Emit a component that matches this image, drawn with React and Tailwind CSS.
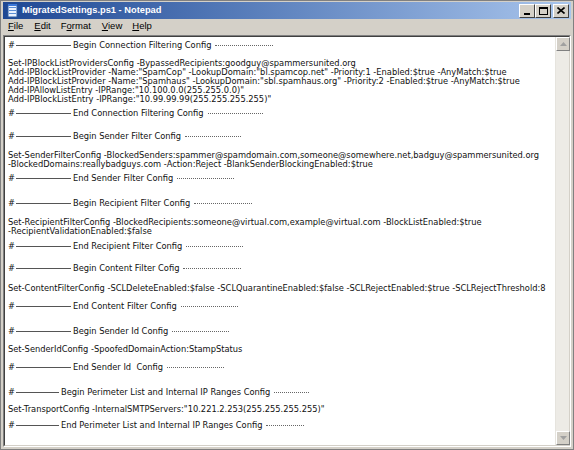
import React from "react";

const F = { fontFamily: '"DejaVu Sans", Verdana, sans-serif' };

function Header({ text, lead = "w-[55px]", trail = "w-[58px]", mt }) {
  return (
    <div className={`flex items-center h-[9px] ${mt}`}>
      <span>#</span>
      <span className={`inline-block h-px bg-[#555] ml-[1px] ${lead}`}></span>
      <span className="ml-[2px] whitespace-pre">{text}</span>
      <span className={`inline-block h-px border-t border-dotted border-[#666] ml-[4px] ${trail}`}></span>
    </div>
  );
}

function Line({ text, mt }) {
  return <div className={`h-[9px] leading-[9px] whitespace-pre ${mt}`}>{text}</div>;
}

function Btn({ children, className = "" }) {
  return (
    <div
      className={`w-[16px] h-[14px] bg-[#d4d0c8] border border-t-white border-l-white border-r-[#404040] border-b-[#404040] flex items-center justify-center text-black ${className}`}
    >
      {children}
    </div>
  );
}

export default function App() {
  return (
    <div className="w-[574px] h-[450px] bg-[#d4d0c8] flex flex-col overflow-hidden border border-[#808080]">
      {/* title bar */}
      <div className="h-[17px] mx-[2px] mt-[1px] bg-gradient-to-r from-[#1e4894] to-[#a9c5ec] flex items-center pl-[3px] pr-[2px]">
        <svg width="14" height="14" viewBox="0 0 14 14">
          <rect x="2" y="1" width="9" height="12" fill="#eaf2ff" stroke="#2a5aa0" />
          <rect x="3" y="3" width="7" height="1" fill="#5b8ed6" />
          <rect x="3" y="6" width="7" height="1" fill="#5b8ed6" />
          <rect x="3" y="9" width="7" height="1" fill="#5b8ed6" />
          <rect x="2" y="0" width="9" height="2" fill="#3c78d8" />
        </svg>
        <span className="ml-[2px] text-white font-bold text-[9.3px] leading-none" style={{ fontFamily: '"Liberation Sans", Arial, sans-serif' }}>
          MigratedSettings.ps1 - Notepad
        </span>
        <div className="ml-auto flex items-center">
          <Btn>
            <div className="w-[6px] h-[2px] bg-black mt-[6px]"></div>
          </Btn>
          <Btn>
            <div className="w-[9px] h-[8px] border border-black border-t-2"></div>
          </Btn>
          <Btn className="ml-[2px]">
            <svg width="8" height="7" viewBox="0 0 8 7">
              <path d="M0.5 0.5 L7.5 6.5 M7.5 0.5 L0.5 6.5" stroke="black" strokeWidth="1.6" />
            </svg>
          </Btn>
        </div>
      </div>
      {/* menu */}
      <div className="h-[13px] flex items-center text-[9.5px] text-black mt-[1px]" style={{ fontFamily: '"Liberation Sans", Arial, sans-serif' }}>
        <span className="ml-[7px]"><u>F</u>ile</span>
        <span className="ml-[11px]"><u>E</u>dit</span>
        <span className="ml-[10px]">F<u>o</u>rmat</span>
        <span className="ml-[11px]"><u>V</u>iew</span>
        <span className="ml-[10px]"><u>H</u>elp</span>
      </div>
      {/* edit area */}
      <div className="flex-1 mx-[2px] mt-[2px] mb-[2px] flex border border-t-[#808080] border-l-[#808080] border-r-white border-b-white">
        <div className="flex-1 flex border border-t-[#404040] border-l-[#404040] border-r-[#d4d0c8] border-b-[#d4d0c8] bg-white">
          <div className="flex-1 pl-[3px] pt-[4px] text-[8.3px] text-[#111] overflow-hidden" style={F}>
            <Header text="Begin Connection Filtering Config" mt="mt-0" trail="w-[58px]" />
            <Line mt="mt-[9px]" text="Set-IPBlockListProvidersConfig -BypassedRecipients:goodguy@spammersunited.org" />
            <Line text={'Add-IPBlockListProvider -Name:"SpamCop" -LookupDomain:"bl.spamcop.net" -Priority:1 -Enabled:$true -AnyMatch:$true'} />
            <Line text={'Add-IPBlockListProvider -Name:"Spamhaus" -LookupDomain:"sbl.spamhaus.org" -Priority:2 -Enabled:$true -AnyMatch:$true'} />
            <Line text={'Add-IPAllowListEntry -IPRange:"10.100.0.0(255.255.0.0)"'} />
            <Line text={'Add-IPBlockListEntry -IPRange:"10.99.99.99(255.255.255.255)"'} />
            <Header text="End Connection Filtering Config" mt="mt-[5px]" trail="w-[55px]" />
            <Header text="Begin Sender Filter Config" mt="mt-[14px]" trail="w-[56px]" />
            <Line mt="mt-[10px]" text="Set-SenderFilterConfig -BlockedSenders:spammer@spamdomain.com,someone@somewhere.net,badguy@spammersunited.org" />
            <Line text="-BlockedDomains:reallybadguys.com -Action:Reject -BlankSenderBlockingEnabled:$true" />
            <Header text="End Sender Filter Config" mt="mt-[5px]" trail="w-[57px]" />
            <Header text="Begin Recipient Filter Config" mt="mt-[16px]" trail="w-[58px]" />
            <Line mt="mt-[10px]" text="Set-RecipientFilterConfig -BlockedRecipients:someone@virtual.com,example@virtual.com -BlockListEnabled:$true" />
            <Line text="-RecipientValidationEnabled:$false" />
            <Header text="End Recipient Filter Config" mt="mt-[6px]" trail="w-[57px]" />
            <Header text="Begin Content Filter Cofig" mt="mt-[13px]" trail="w-[58px]" />
            <Line mt="mt-[11px]" text="Set-ContentFilterConfig -SCLDeleteEnabled:$false -SCLQuarantineEnabled:$false -SCLRejectEnabled:$true -SCLRejectThreshold:8" />
            <Header text="End Content Filter Config" mt="mt-[9px]" trail="w-[57px]" />
            <Header text="Begin Sender Id Config" mt="mt-[16px]" trail="w-[57px]" />
            <Line mt="mt-[9px]" text="Set-SenderIdConfig -SpoofedDomainAction:StampStatus" />
            <Header text="End Sender Id  Config" mt="mt-[9px]" trail="w-[57px]" />
            <Header text="Begin Perimeter List and Internal IP Ranges Config" lead="w-[43px]" mt="mt-[16px]" trail="w-[35px]" />
            <Line mt="mt-[8px]" text={'Set-TransportConfig -InternalSMTPServers:"10.221.2.253(255.255.255.255)"'} />
            <Header text="End Perimeter List and Internal IP Ranges Config" lead="w-[43px]" mt="mt-[7px]" trail="w-[38px]" />
          </div>
          {/* scrollbar */}
          <div className="w-[14px] bg-[#edebe6] flex flex-col justify-between border-l border-[#e6e4de]">
            <div className="w-[14px] h-[14px] bg-[#d4d0c8] border border-t-white border-l-white border-r-[#808080] border-b-[#808080] flex items-center justify-center">
              <svg width="7" height="4" viewBox="0 0 7 4"><path d="M3.5 0 L7 4 L0 4 Z" fill="#a0a0a0" /></svg>
            </div>
            <div className="w-[14px] h-[14px] bg-[#d4d0c8] border border-t-white border-l-white border-r-[#808080] border-b-[#808080] flex items-center justify-center">
              <svg width="7" height="4" viewBox="0 0 7 4"><path d="M0 0 L7 0 L3.5 4 Z" fill="#a0a0a0" /></svg>
            </div>
          </div>
        </div>
      </div>
    </div>
  );
}
